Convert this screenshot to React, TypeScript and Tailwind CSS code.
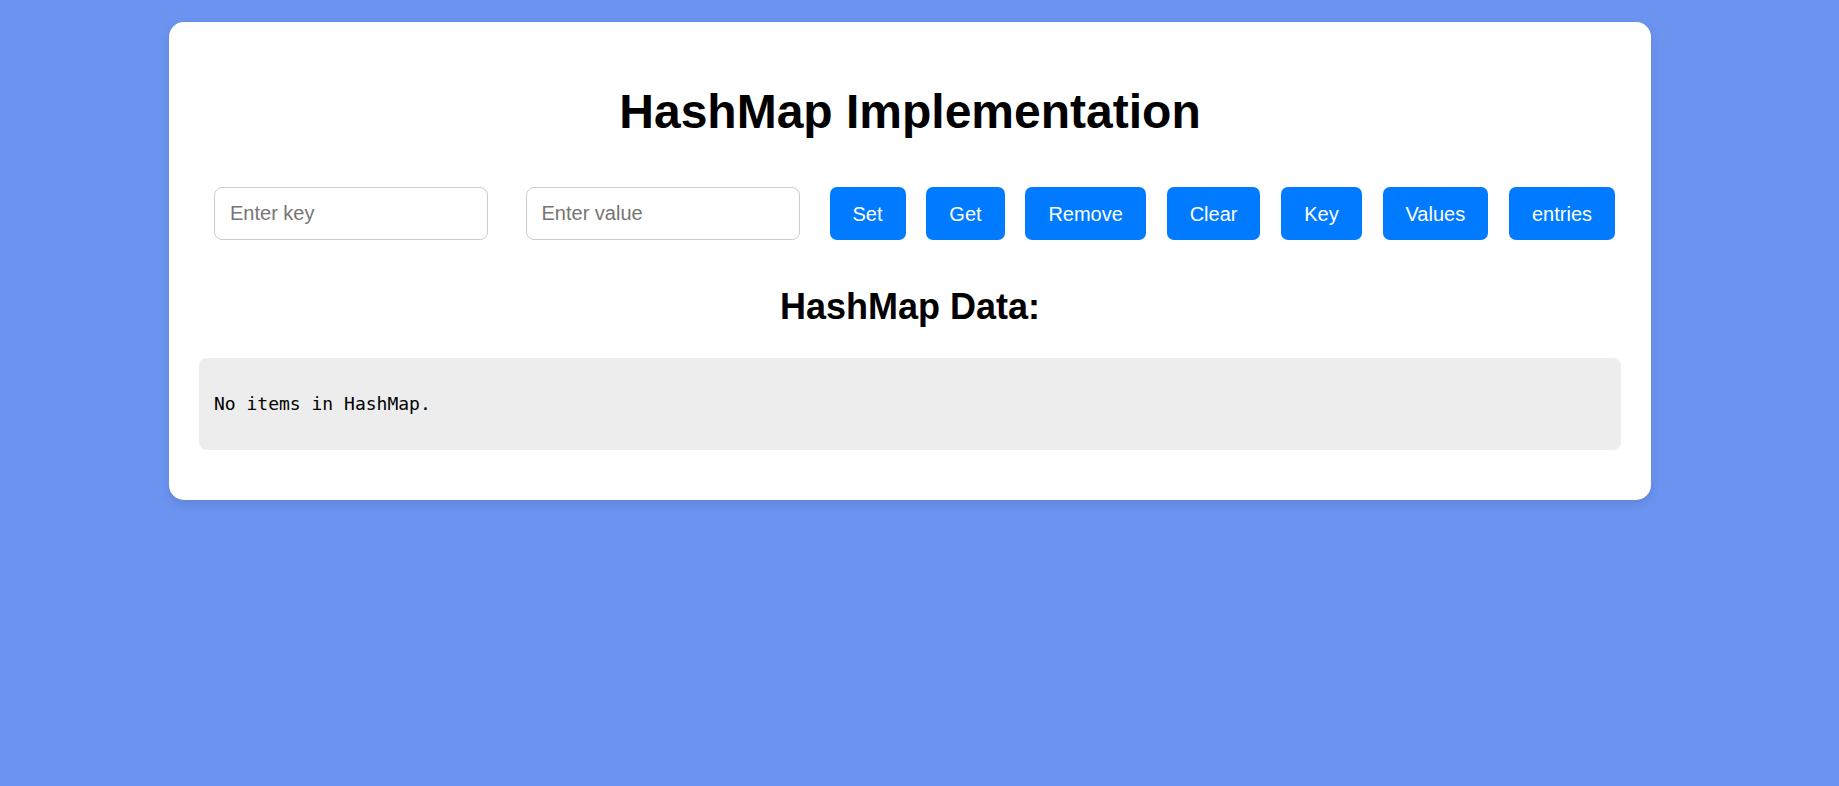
import { useState } from "react";

const buttons = ["Set", "Get", "Remove", "Clear", "Key", "Values", "entries"];

export default function App() {
  const [key, setKey] = useState("");
  const [value, setValue] = useState("");

  return (
    <div className="min-h-screen bg-[#6b93f0] pt-[22px] font-['Liberation_Sans',Arial,sans-serif]">
      <div className="ml-[169px] w-[1482px] rounded-[15px] bg-white px-[30px] pt-[30px] pb-[30px] shadow-[0_4px_10px_rgba(0,0,0,0.1)]">
        <h1 className="mt-[32px] text-center text-[48px] font-bold leading-[55px] text-black">
          HashMap Implementation
        </h1>

        <div className="mt-[48px] flex items-center pl-[15px]">
          <input
            value={key}
            onChange={(e) => setKey(e.target.value)}
            placeholder="Enter key"
            className="h-[53px] w-[274px] rounded-[8px] border border-[#cccccc] px-[15px] text-[20px] text-black outline-none placeholder:text-[#757575]"
          />
          <input
            value={value}
            onChange={(e) => setValue(e.target.value)}
            placeholder="Enter value"
            className="ml-[37.5px] h-[53px] w-[274px] rounded-[8px] border border-[#cccccc] px-[15px] text-[20px] text-black outline-none placeholder:text-[#757575]"
          />
          <div className="ml-[30px] flex items-center gap-[20.8px]">
            {buttons.map((b) => (
              <button
                key={b}
                className="h-[53px] rounded-[7px] bg-[#007bff] px-[23px] text-[20px] text-white"
              >
                {b}
              </button>
            ))}
          </div>
        </div>

        <h2 className="mt-[46px] text-center text-[36px] font-bold leading-[41px] text-black">
          HashMap Data:
        </h2>

        <div className="mt-[30.7px] mb-[20px] rounded-[8px] bg-[#ededed] px-[15px] py-[15px]">
          <p className="my-[17.6px] font-['DejaVu_Sans_Mono',monospace] text-[18px] leading-[27px] text-black">
            No items in HashMap.
          </p>
        </div>
      </div>
    </div>
  );
}
